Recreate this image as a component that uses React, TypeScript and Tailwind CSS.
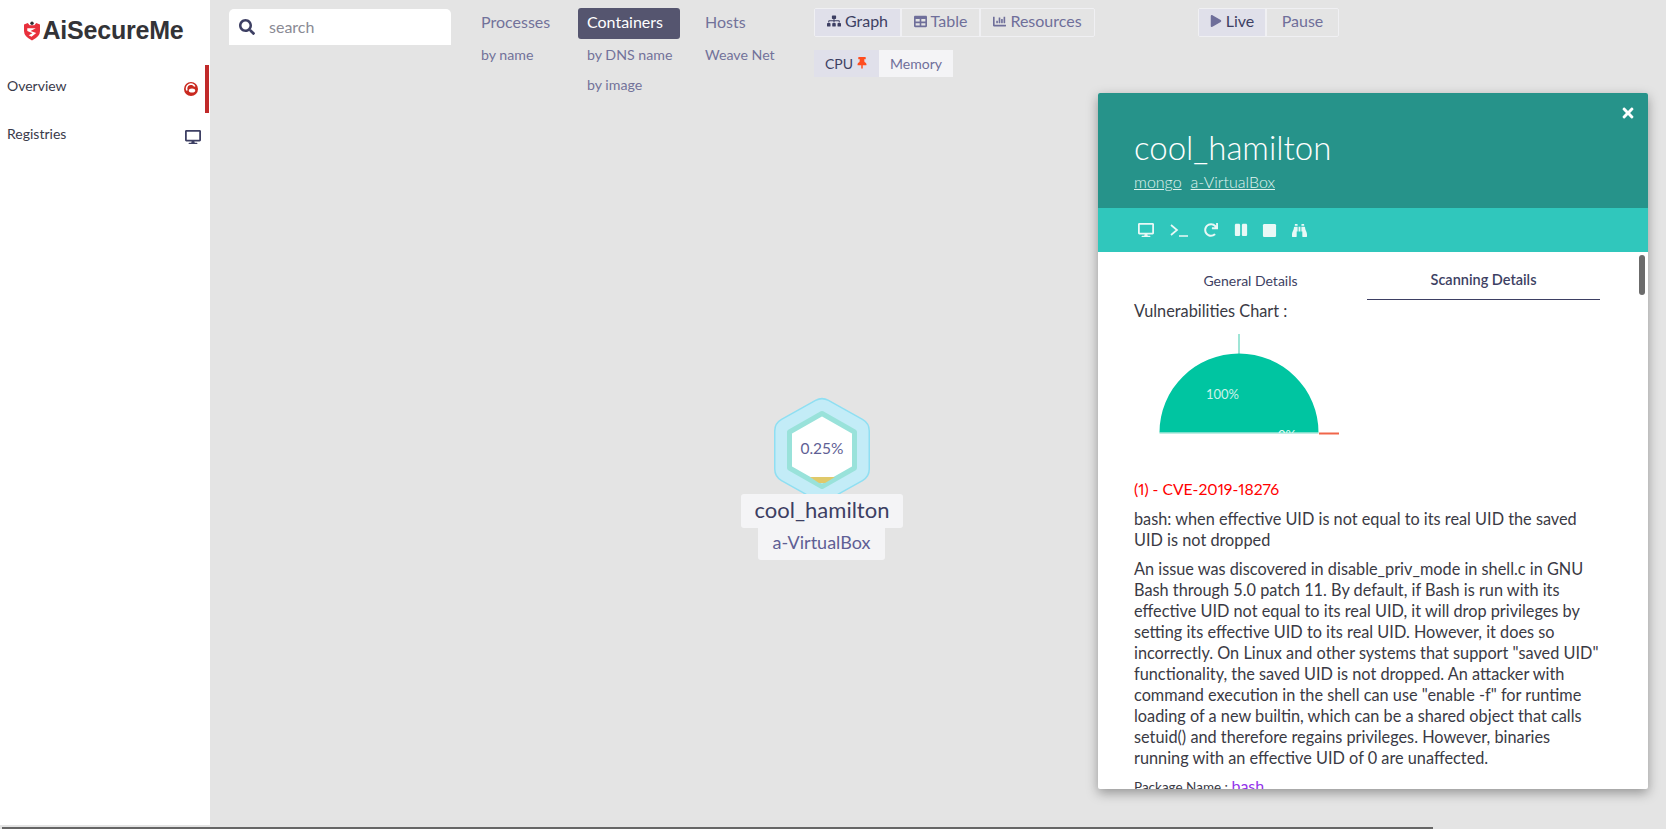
import { FaBinoculars, FaChartBar, FaDesktop, FaPause, FaPlay, FaRedo, FaSearch, FaSitemap, FaStop, FaTable, FaThumbtack, FaTimes } from "react-icons/fa";

const desc = [
  "An issue was discovered in disable_priv_mode in shell.c in GNU",
  "Bash through 5.0 patch 11. By default, if Bash is run with its",
  "effective UID not equal to its real UID, it will drop privileges by",
  "setting its effective UID to its real UID. However, it does so",
  "incorrectly. On Linux and other systems that support \"saved UID\"",
  "functionality, the saved UID is not dropped. An attacker with",
  "command execution in the shell can use \"enable -f\" for runtime",
  "loading of a new builtin, which can be a shared object that calls",
  "setuid() and therefore regains privileges. However, binaries",
  "running with an effective UID of 0 are unaffected.",
];

function Logo() {
  return (
    <div className="flex h-[65px] items-center justify-center pr-[2px] pb-[3px]">
      <svg width="16" height="20" viewBox="0 0 17 20" className="mr-[2px]">
        <path d="M0 3 L4 1.5 L6 4 L11 4 L13 1.5 L17 3 L17 10 Q17 16 8.5 20 Q0 16 0 10 Z" fill="#e8303c" />
        <circle cx="8.5" cy="1.8" r="1.8" fill="#2f2f33" />
        <path d="M3.5 7 L12.5 7 L7 10 L13 12 L8 16 L5 14.5 L9 12.4 L3.5 10 Z" fill="#fff" />
      </svg>
      <span className="font-['Liberation_Sans',sans-serif] text-[25px] font-bold tracking-[-0.2px] text-[#333337]">AiSecureMe</span>
    </div>
  );
}

function Segment({ active, children, w }: { active?: boolean; children: React.ReactNode; w: string }) {
  return (
    <div className={`flex items-center justify-center gap-1 border-r-2 border-[#f0f0f3] pb-[3px] last:border-r-0 ${w} ${active ? "bg-[#e0e0ea] text-[#3d3f63]" : "text-[#6f6f9a]"}`}>
      {children}
    </div>
  );
}

function TopoCol({ title, active, subs, w }: { title: string; active?: boolean; subs: string[]; w: string }) {
  return (
    <div className={`flex flex-col ${w}`}>
      <div className={`flex h-[31px] items-center rounded-[3px] px-[9px] pb-[3px] text-[16px] ${active ? "bg-[#55556f] text-white" : "text-[#72729a]"}`}>{title}</div>
      <div className="flex flex-col px-[9px] pt-[1px] text-[14.2px] whitespace-nowrap text-[#72729a]">
        {subs.map((s) => (
          <div key={s} className="flex h-[30px] items-center">{s}</div>
        ))}
      </div>
    </div>
  );
}

export default function App() {
  return (
    <div className="relative flex h-[829px] w-[1666px] overflow-hidden bg-[#e4e4e4] font-['Lato',sans-serif]">
      <aside className="h-[825px] w-[210px] shrink-0 bg-white text-[#3a3a4a]">
        <Logo />
        <div className="mr-[1px] flex h-[48px] items-center justify-between border-r-[4px] border-[#c02a2a] pr-[8px] pl-[7px] text-[14px]">
          <span className="pb-[7px]">Overview</span>
          <svg width="14" height="14" viewBox="0 0 14 14" className="mr-[-1px]">
            <circle cx="7" cy="7" r="7" fill="#c9291f" />
            <path d="M3 8.5 A4.2 4.2 0 0 1 10.8 4.5" fill="none" stroke="#fff" strokeWidth="1.6" />
            <ellipse cx="8" cy="8.6" rx="3.2" ry="2" fill="#fff" />
          </svg>
        </div>
        <div className="flex h-[48px] items-center justify-between pr-[9px] pl-[7px] text-[14px]">
          <span className="pb-[8px]">Registries</span>
          <FaDesktop className="text-[16px] text-[#3d3f63]" />
        </div>
      </aside>

      <main className="flex-1 pt-[8px] pl-[19px]">
        <div className="flex items-start">
          <div className="mt-[1px] flex h-[36px] w-[222px] items-center rounded-t-[5px] bg-white pl-[10px] text-[16px] text-[#8a8a94]">
            <FaSearch className="mr-[14px] text-[16px] text-[#3d3f63]" />
            search
          </div>
          <div className="ml-[21px] flex">
            <TopoCol title="Processes" subs={["by name"]} w="w-[106px]" />
            <TopoCol title="Containers" active subs={["by DNS name", "by image"]} w="w-[102px] mr-[16px]" />
            <TopoCol title="Hosts" subs={["Weave Net"]} w="w-[118px]" />
          </div>
          <div className="flex flex-col">
            <div className="flex h-[29px] w-[281px] rounded-[2px] border border-[#f0f0f3] text-[16px]">
              <Segment active w="w-[87px]"><FaSitemap className="text-[14px]" /> Graph</Segment>
              <Segment w="w-[79px]"><FaTable className="text-[13px]" /> Table</Segment>
              <Segment w="flex-1"><FaChartBar className="text-[13px]" /> Resources</Segment>
            </div>
            <div className="mt-[13px] flex h-[27px] w-[139px] rounded-[2px] text-[14px]">
              <div className="flex w-[65px] items-center justify-center gap-[3px] bg-[#e0e0ea] pb-[1px] text-[#3d3f63]">CPU <FaThumbtack className="text-[12px] text-[#ff4d1f]" /></div>
              <div className="flex flex-1 items-center justify-center bg-[#f4f4f6] pb-[1px] text-[#6f6f9a]">Memory</div>
            </div>
          </div>
          <div className="ml-[103px] flex h-[29px] w-[141px] rounded-[2px] border border-[#f0f0f3] text-[16px]">
            <Segment active w="w-[68px]"><FaPlay className="text-[12px] text-[#6f6f9a]" /> Live</Segment>
            <Segment w="flex-1">Pause</Segment>
          </div>
        </div>
      </main>

      {/* graph node on the free canvas */}
      <div className="absolute top-[396px] left-[741px] flex w-[162px] flex-col items-center">
        <svg width="100" height="108" viewBox="0 0 100 108" className="-mb-[10px]">
          <path d="M50 16 L84 35 L84 73 L50 92 L16 73 L16 35 Z" fill="#8fdff2" stroke="#8fdff2" strokeWidth="28" strokeLinejoin="round" />
          <path d="M50 16 L84 35 L84 73 L50 92 L16 73 L16 35 Z" fill="#c3ecf7" stroke="#c3ecf7" strokeWidth="25" strokeLinejoin="round" />
          <path d="M50 17.5 L82.5 36 L82.5 72 L50 90.5 L17.5 72 L17.5 36 Z" fill="#fff" stroke="#99e2da" strokeWidth="5" strokeLinejoin="round" />
          <path d="M38 81 L63 81 L53 87 L47 87 Z" fill="#e0c96a" />
          <text x="50" y="54" textAnchor="middle" dominantBaseline="middle" fontSize="15.5" fill="#5f5f95">0.25%</text>
        </svg>
        <div className="z-10 flex h-[34px] w-[162px] items-center justify-center rounded-[3px] bg-[#f4f4f6] pb-[4px] text-[22px] text-[#3d3f63]">cool_hamilton</div>
        <div className="-ml-[1px] flex h-[32px] w-[127px] items-center justify-center rounded-b-[3px] bg-[#f4f4f6] pb-[3px] text-[18px] text-[#5f5f95]">a-VirtualBox</div>
      </div>

      {/* details panel */}
      <section className="absolute top-[93px] left-[1098px] flex h-[696px] w-[550px] flex-col overflow-hidden rounded-[2px] bg-white shadow-[0_4px_12px_rgba(0,0,0,0.35)]">
        <header className="relative h-[115px] shrink-0 bg-[#26938a] pt-[34px] pl-[36px] text-white">
          <FaTimes className="absolute top-[12px] right-[12px] text-[16px]" />
          <div className="text-[33px] leading-[40px] font-light">cool_hamilton</div>
          <div className="mt-[5px] flex gap-[9px] text-[16px] leading-[20px] font-light text-[#e0f3f0] underline">
            <span>mongo</span>
            <span>a-VirtualBox</span>
          </div>
        </header>
        <div className="flex h-[44px] shrink-0 items-center gap-[16px] bg-[#30c7bc] pl-[40px] text-[13px] text-[#e9f8f6]">
          <FaDesktop className="text-[16px]" />
          <svg width="18" height="13" viewBox="0 0 18 13" fill="none" stroke="currentColor" strokeWidth="1.7"><path d="M1 1 L7 6 L1 11" /><path d="M9 12 H18" /></svg>
          <FaRedo className="text-[14px]" />
          <FaPause className="text-[14px]" />
          <FaStop className="-ml-[2px] text-[15px]" />
          <FaBinoculars className="-ml-[1px] text-[15px]" />
        </div>
        <div className="relative flex-1 overflow-hidden">
          <div className="absolute top-[3px] right-[3px] h-[40px] w-[6px] rounded-[3px] bg-[#6b6b6b]" />
          <div className="flex pl-[36px] text-[14px] text-[#3d3f63]">
            <div className="flex h-[48px] w-[233px] items-center justify-center pt-[8px]">General Details</div>
            <div className="flex h-[48px] w-[233px] items-center justify-center border-b-[1px] border-[#3d3f63] pt-[8px] text-[14.5px] font-semibold">Scanning Details</div>
          </div>
          <div className="pl-[36px] text-[16.3px] leading-[21px] text-[#3a3a44]">
            <div className="h-[20px]">Vulnerabilities Chart :</div>
            <svg width="200" height="102" viewBox="0 0 200 102" className="mt-[13px] ml-[21px] block">
              <defs>
                <clipPath id="pie-clip"><rect x="0" y="0" width="200" height="100" /></clipPath>
              </defs>
              <line x1="84" y1="1" x2="84" y2="21" stroke="#7fdcc8" strokeWidth="1.5" />
              <path d="M4.5 99.5 A79.5 79 0 0 1 163.5 99.5 Z" fill="#00c5a1" />
              <line x1="4.5" y1="100" x2="163.5" y2="100" stroke="#7fdcc8" strokeWidth="1" />
              <line x1="164" y1="100.5" x2="184" y2="100.5" stroke="#f0664a" strokeWidth="2" />
              <text x="51" y="66" fontSize="13" fill="#cdf3ea">100%</text>
              <g clipPath="url(#pie-clip)"><text x="123" y="107" fontSize="13" fill="#e6faf5">0%</text></g>
            </svg>
            <div className="mt-[44px] text-[15.7px] text-[#f00] proportional-nums">(1) - CVE-2019-18276</div>
            <div className="mt-[8px] whitespace-nowrap">
              bash: when effective UID is not equal to its real UID the saved<br />UID is not dropped
            </div>
            <div className="mt-[8px] whitespace-nowrap">
              {desc.map((l) => (
                <div key={l}>{l}</div>
              ))}
            </div>
            <div className="mt-[7px] text-[13.5px] whitespace-nowrap">
              Package Name : <span className="text-[16px] text-[#9333ea]">bash</span>
            </div>
          </div>
        </div>
      </section>

      <div className="absolute bottom-0 left-[2px] h-[2px] w-[1431px] bg-[#666]" />
    </div>
  );
}
